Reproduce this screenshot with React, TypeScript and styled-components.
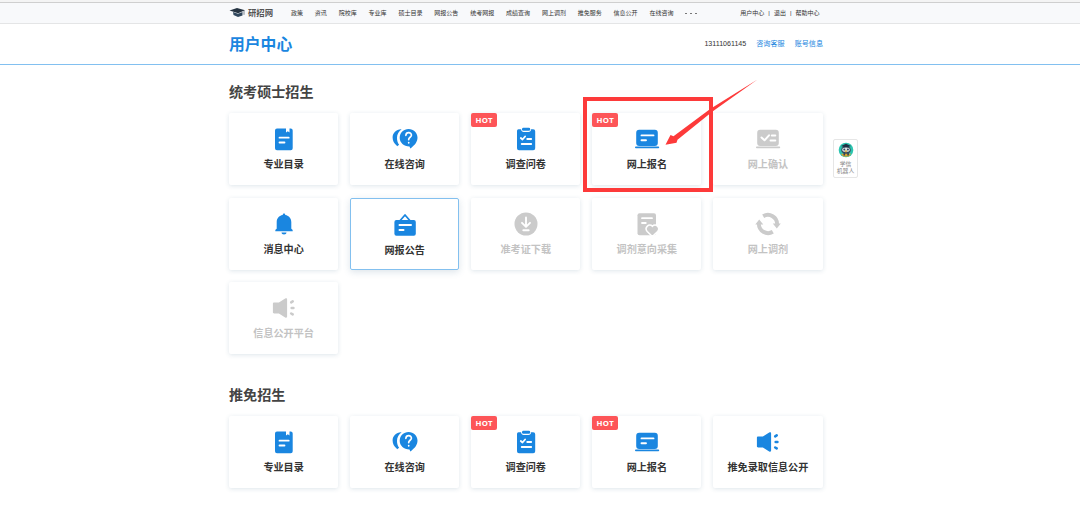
import React from "react";
import styled, { createGlobalStyle, css } from "styled-components";

const BLUE = "#1a86e0";
const GREY = "#cbcbcb";

const GlobalStyle = createGlobalStyle`
  * { box-sizing: border-box; }
  body {
    margin: 0;
    background: #fff;
    color: #333;
    font-family: "Liberation Sans", "Noto Sans CJK SC", sans-serif;
  }
`;

const Page = styled.div`
  position: relative;
  width: 1080px;
  height: 516px;
  overflow: hidden;
  background: #fff;
`;

const Container = styled.div`
  width: 594px;
  margin-left: 229px;
  display: flex;
  align-items: center;
`;

const TopBar = styled.nav`
  height: 24px;
  padding-top: 1px;
  display: flex;
  background: #f8f9fb;
  border-bottom: 1px solid #e4e5e6;
  box-shadow: inset 0 2px #f4f4f4, inset 0 3px #cfcfcf;
`;

const Logo = styled.div`
  display: flex;
  align-items: center;
  gap: 2px;
  width: 62px;
  font: 700 8.4px/12px "Noto Sans CJK SC", sans-serif;
  color: #555;
  white-space: nowrap;
`;

const NavList = styled.div`
  display: flex;
  gap: 11.85px;
  padding-top: 2px;
  font-size: 6px;
  line-height: 10px;
  color: #333;
  white-space: nowrap;
`;

const Dots = styled.span`
  display: flex;
  align-items: center;
  gap: 3px;
  i {
    width: 2px;
    height: 1px;
    background: #777;
  }
`;

const UserLinks = styled.div`
  display: flex;
  gap: 4px;
  margin-left: auto;
  padding: 2px 3.5px 0 0;
  font-size: 6px;
  line-height: 10px;
  white-space: nowrap;
`;

const Header = styled.header`
  height: 41px;
  display: flex;
  border-bottom: 1px solid #82c0f0;
`;

const Title = styled.h1`
  margin: 1px 0 0;
  font-size: 15.8px;
  line-height: 24px;
  font-weight: 700;
  color: ${BLUE};
`;

const Account = styled.div`
  display: flex;
  gap: 10px;
  margin-left: auto;
  font-size: 7.1px;
  line-height: 12px;
  a { color: ${BLUE}; }
`;

const Section = styled.section<{ $top: number }>`
  width: 594px;
  margin-left: 229px;
  padding-top: ${(p) => p.$top}px;
`;

const SectionTitle = styled.h2`
  margin: 0 0 11px;
  font-size: 14.1px;
  line-height: 20px;
  font-weight: 700;
  color: #444;
`;

const Grid = styled.div`
  display: grid;
  grid-template-columns: repeat(5, 109.2px);
  column-gap: 11.9px;
  row-gap: 12.5px;
`;

const CardBox = styled.a<{ $muted?: boolean; $active?: boolean }>`
  position: relative;
  height: 72px;
  padding-top: ${(p) => (p.$active ? 15 : 14)}px;
  display: flex;
  flex-direction: column;
  align-items: center;
  border-radius: 2px;
  background: #fff;
  color: ${(p) => (p.$muted ? GREY : BLUE)};
  box-shadow: 0 1px 4px rgba(80, 120, 150, 0.19);
  ${(p) =>
    p.$active &&
    css`
      outline: 1px solid #83c0ef;
      outline-offset: -1px;
      box-shadow: 0 2px 7px rgba(80, 120, 150, 0.2);
    `}
  svg { display: block; flex: none; }
`;

const CardLabel = styled.span<{ $muted?: boolean }>`
  margin-top: 7.3px;
  font-size: 10.1px;
  line-height: 14px;
  font-weight: 700;
  white-space: nowrap;
  color: ${(p) => (p.$muted ? "#c3c3c3" : "#333")};
`;

const HotBadge = styled.span`
  position: absolute;
  left: 0;
  top: 0;
  width: 26px;
  height: 14px;
  border-radius: 2px;
  background: #fd5558;
  color: #fff;
  font: 700 7.8px/15px "Open Sans", sans-serif;
  letter-spacing: 0.2px;
  text-align: center;
`;

const Robot = styled.aside`
  position: absolute;
  left: 833px;
  top: 139px;
  width: 25px;
  height: 39px;
  padding-top: 2px;
  display: flex;
  flex-direction: column;
  align-items: center;
  border: 1px solid #e6e6e6;
  border-radius: 2px;
  background: #fff;
  font-size: 5.8px;
  line-height: 7.8px;
  color: #888;
  text-align: center;
  white-space: nowrap;
  svg { margin-bottom: 2.5px; flex: none; }
`;

const Highlight = styled.div`
  position: absolute;
  left: 583px;
  top: 97px;
  width: 130px;
  height: 95px;
  border: 4px solid #fd3a3a;
`;

const Arrow = styled.svg`
  position: absolute;
  left: 660px;
  top: 75px;
`;

type IconName =
  | "book" | "chat" | "survey" | "laptop" | "confirm" | "bell"
  | "notice" | "download" | "heart" | "sync" | "speaker";

const W = { stroke: "#fff", fill: "none", strokeLinecap: "round", strokeLinejoin: "round" } as const;

const shapes: Record<IconName, React.ReactNode> = {
  book: (
    <>
      <path fill="currentColor" d="M5 1.5h9v4l1.8-1.3 1.7 1.3v-4h1.2a2 2 0 0 1 2 2v17.7a2 2 0 0 1-2 2H5a2 2 0 0 1-2-2V3.500a2 2 0 0 1 2-2z" />
      <path {...W} strokeWidth="1.8" d="M7.500 10.700h9.200M7.500 15.500h5" />
    </>
  ),
  chat: (
    <>
      <path fill="currentColor" d="M8.600 2.300C3.700 1.900-.4 5.800-.4 10.500c0 3 1.500 6 4 8l.6.7 1.900-1.400C4.600 15.800 4 13.400 4 10.800c0-3.500 1.800-6.600 4.600-8.500z" />
      <path fill="currentColor" d="M15.600 1.900c5 0 8.900 3.800 8.900 8.600 0 4.300-2.500 7.300-6.400 10.400l-.8.6-.8-2.100C10.800 19.400 6.700 15.500 6.700 10.700c0-4.900 3.900-8.800 8.900-8.800z" />
      <path {...W} strokeWidth="1.700" d="M12.900 8.300c.2-3.700 5.700-3.400 5.500 0-.1 2-2.700 2-2.700 4.300M15.700 15.500v.3" />
    </>
  ),
  survey: (
    <>
      <path fill="currentColor" d="M4.500 2.300h2.600c.2 2 1.100 2.700 2.600 2.700h4.800c1.500 0 2.400-.7 2.600-2.700h2.100a2 2 0 0 1 2 2v17a2 2 0 0 1-2 2H5a2 2 0 0 1-2-2v-17c0-1.200.6-2 1.500-2z" />
      <rect fill="currentColor" x="8" y=".8" width="8.200" height="3" rx="1.400" />
      <path {...W} strokeWidth="1.800" d="M6.800 11l1.700 1.500 2.600-3M13.200 12h4M7.700 17h9.500" />
    </>
  ),
  laptop: (
    <>
      <rect fill="currentColor" x="1.200" y="2.700" width="21.600" height="16.300" rx="3" />
      <path stroke="currentColor" strokeWidth="1.600" strokeLinecap="round" d="M.8 20.400h22.600" />
      <path {...W} strokeWidth="1.900" d="M6.500 8.400h12M6.500 13.200h4.500" />
    </>
  ),
  confirm: (
    <>
      <rect fill="currentColor" x="1.200" y="2.700" width="21.600" height="16.300" rx="3" />
      <path stroke="currentColor" strokeWidth="1.600" strokeLinecap="round" d="M.8 20.400h22.600" />
      <path {...W} strokeWidth="2" d="M5.500 10.500l3 2.800 4.500-5M15.800 8.500h3.500M14.500 13.400h4.800" />
    </>
  ),
  bell: (
    <>
      <path fill="currentColor" d="M12 1.500c.9 0 1.300.6 1.300 1.500 3.800.7 6 3.500 6 7.200v6.400c0 .7 1.400.8 1.400 1.800v.8H3.300v-.8c0-1 1.400-1.100 1.400-1.800v-6.400c0-3.700 2.200-6.500 6-7.200 0-.9.400-1.500 1.300-1.500z" />
      <path fill="currentColor" d="M9.500 20.500h5c0 1.300-1 2-2.500 2s-2.500-.7-2.500-2z" />
    </>
  ),
  notice: (
    <>
      <path stroke="currentColor" fill="none" strokeWidth="1.800" strokeLinejoin="round" d="M7.200 7.500L12 2l4.800 5.500" />
      <rect fill="currentColor" x="1.400" y="6.900" width="21.400" height="15.800" rx="2" />
      <path {...W} strokeWidth="2" d="M6.500 12h11.500M6.500 16.900h4" />
    </>
  ),
  download: (
    <>
      <circle fill="currentColor" cx="12" cy="12" r="11.500" />
      <path {...W} strokeWidth="1.900" d="M12 5.500v8.700M8 10.800l4 4 4-4M9.300 18.200h5.400" />
    </>
  ),
  heart: (
    <>
      <rect fill="currentColor" x="2.500" y="1.200" width="18.500" height="22" rx="2" />
      <path {...W} strokeWidth="1.800" d="M7 6.200h10M7 11h3.800" />
      <path fill="currentColor" stroke="#fff" strokeWidth="1.500" d="M17.400 24.500l-5.200-5c-3.300-4 2-8.700 5.200-5.200 3.200-3.500 8.500 1.200 5.200 5.200z" />
    </>
  ),
  sync: (
    <>
      <path stroke="currentColor" fill="none" strokeWidth="3.900" d="M7.200 4.200A9.200 9.200 0 0 1 21.100 12.500M16.800 19.800A9.200 9.200 0 0 1 2.900 11.500" />
      <path fill="currentColor" d="M16.800 11.500h8L20.800 16.400zM-.7 12.500h8L3.200 7.600z" />
    </>
  ),
  speaker: (
    <>
      <path fill="currentColor" d="M2.200 6.600h4.700L13.200 2.600c1.100-.7 1.900-.3 1.900.8v17.200c0 1.100-.8 1.500-1.900.8L6.900 17.400H2.200c-.8 0-1.300-.4-1.300-1.200V7.800c0-.8.500-1.200 1.300-1.200z" />
      <path stroke="currentColor" strokeWidth="2.600" strokeLinecap="round" d="M19.200 6.300l1.500-.9M19.700 12h1.700M19.200 17.500l1.500.9" />
    </>
  ),
};

interface Item {
  label: string;
  icon: IconName;
  hot?: boolean;
  muted?: boolean;
  active?: boolean;
}

function Card({ label, icon, hot, muted, active }: Item) {
  return (
    <CardBox $muted={muted} $active={active}>
      {hot && <HotBadge>HOT</HotBadge>}
      <svg width="24" height="24" viewBox="0 0 24 24" overflow="visible">{shapes[icon]}</svg>
      <CardLabel $muted={muted}>{label}</CardLabel>
    </CardBox>
  );
}

const exam: Item[] = [
  { label: "专业目录", icon: "book" },
  { label: "在线咨询", icon: "chat" },
  { label: "调查问卷", icon: "survey", hot: true },
  { label: "网上报名", icon: "laptop", hot: true },
  { label: "网上确认", icon: "confirm", muted: true },
  { label: "消息中心", icon: "bell" },
  { label: "网报公告", icon: "notice", active: true },
  { label: "准考证下载", icon: "download", muted: true },
  { label: "调剂意向采集", icon: "heart", muted: true },
  { label: "网上调剂", icon: "sync", muted: true },
  { label: "信息公开平台", icon: "speaker", muted: true },
];

const recommend: Item[] = [
  ...exam.slice(0, 4),
  { label: "推免录取信息公开", icon: "speaker" },
];

const nav = ["政策", "资讯", "院校库", "专业库", "硕士目录", "网报公告", "统考网报", "成绩查询", "网上调剂", "推免服务", "信息公开", "在线咨询"];

export default function App() {
  return (
    <Page>
      <GlobalStyle />
      <TopBar>
        <Container>
          <Logo>
            <svg width="17" height="11" viewBox="0 0 17 11">
              <path fill="#263442" d="M.5 3.500L8 1l8 2.300-6.800 3z" />
              <path fill="#30475d" d="M4 5l5 1.800 4.500-1.700v3.500L9 10 4.500 8z" />
              <path stroke="#5b6b79" strokeWidth=".8" d="M15 3.800v4" />
            </svg>
            研招网
          </Logo>
          <NavList>
            {nav.map((n) => <span key={n}>{n}</span>)}
            <Dots><i /><i /><i /></Dots>
          </NavList>
          <UserLinks>
            <span>用户中心</span><span>|</span><span>退出</span><span>|</span><span>帮助中心</span>
          </UserLinks>
        </Container>
      </TopBar>
      <Header>
        <Container>
          <Title>用户中心</Title>
          <Account>
            <span>13111061145</span><a>咨询客服</a><a>账号信息</a>
          </Account>
        </Container>
      </Header>
      <Section $top={17}>
        <SectionTitle>统考硕士招生</SectionTitle>
        <Grid>{exam.map((i) => <Card key={i.label} {...i} />)}</Grid>
      </Section>
      <Section $top={31}>
        <SectionTitle>推免招生</SectionTitle>
        <Grid>{recommend.map((i) => <Card key={i.label} {...i} />)}</Grid>
      </Section>
      <Robot>
        <svg width="16" height="16" viewBox="0 0 16 16">
          <circle cx="8" cy="8" r="7.300" fill="#2cc5b0" />
          <ellipse cx="8" cy="8" rx="4.800" ry="4" fill="#33465a" />
          <path fill="#203044" d="M3 4l5-2.300L13 4 8 5.800z" />
          <ellipse cx="8" cy="7.800" rx="3.800" ry="2.200" fill="#dce6e8" />
          <circle cx="6.300" cy="7.600" r="1" fill="#33465a" />
          <circle cx="9.900" cy="7.600" r="1" fill="#33465a" />
          <path fill="#d9a52e" d="M6.700 8.600h2.600L8 11zM2.800 11.800h10.400L10.800 14.500H5.200z" />
          <path fill="#33465a" d="M5.500 11h1.600v2.500H5.500zM9.300 11h1.600v2.500H9.300z" />
        </svg>
        <span>学信</span>
        <span>机器人</span>
      </Robot>
      <Highlight />
      <Arrow width="100" height="75" viewBox="0 0 100 75">
        <path fill="#fd3a3a" d="M97.500 4.500L52.500 36.500 17.500 64.800 16.500 67.800 5.500 69.800 10.500 60 13.500 61.300 50.500 33.800z" />
      </Arrow>
    </Page>
  );
}
